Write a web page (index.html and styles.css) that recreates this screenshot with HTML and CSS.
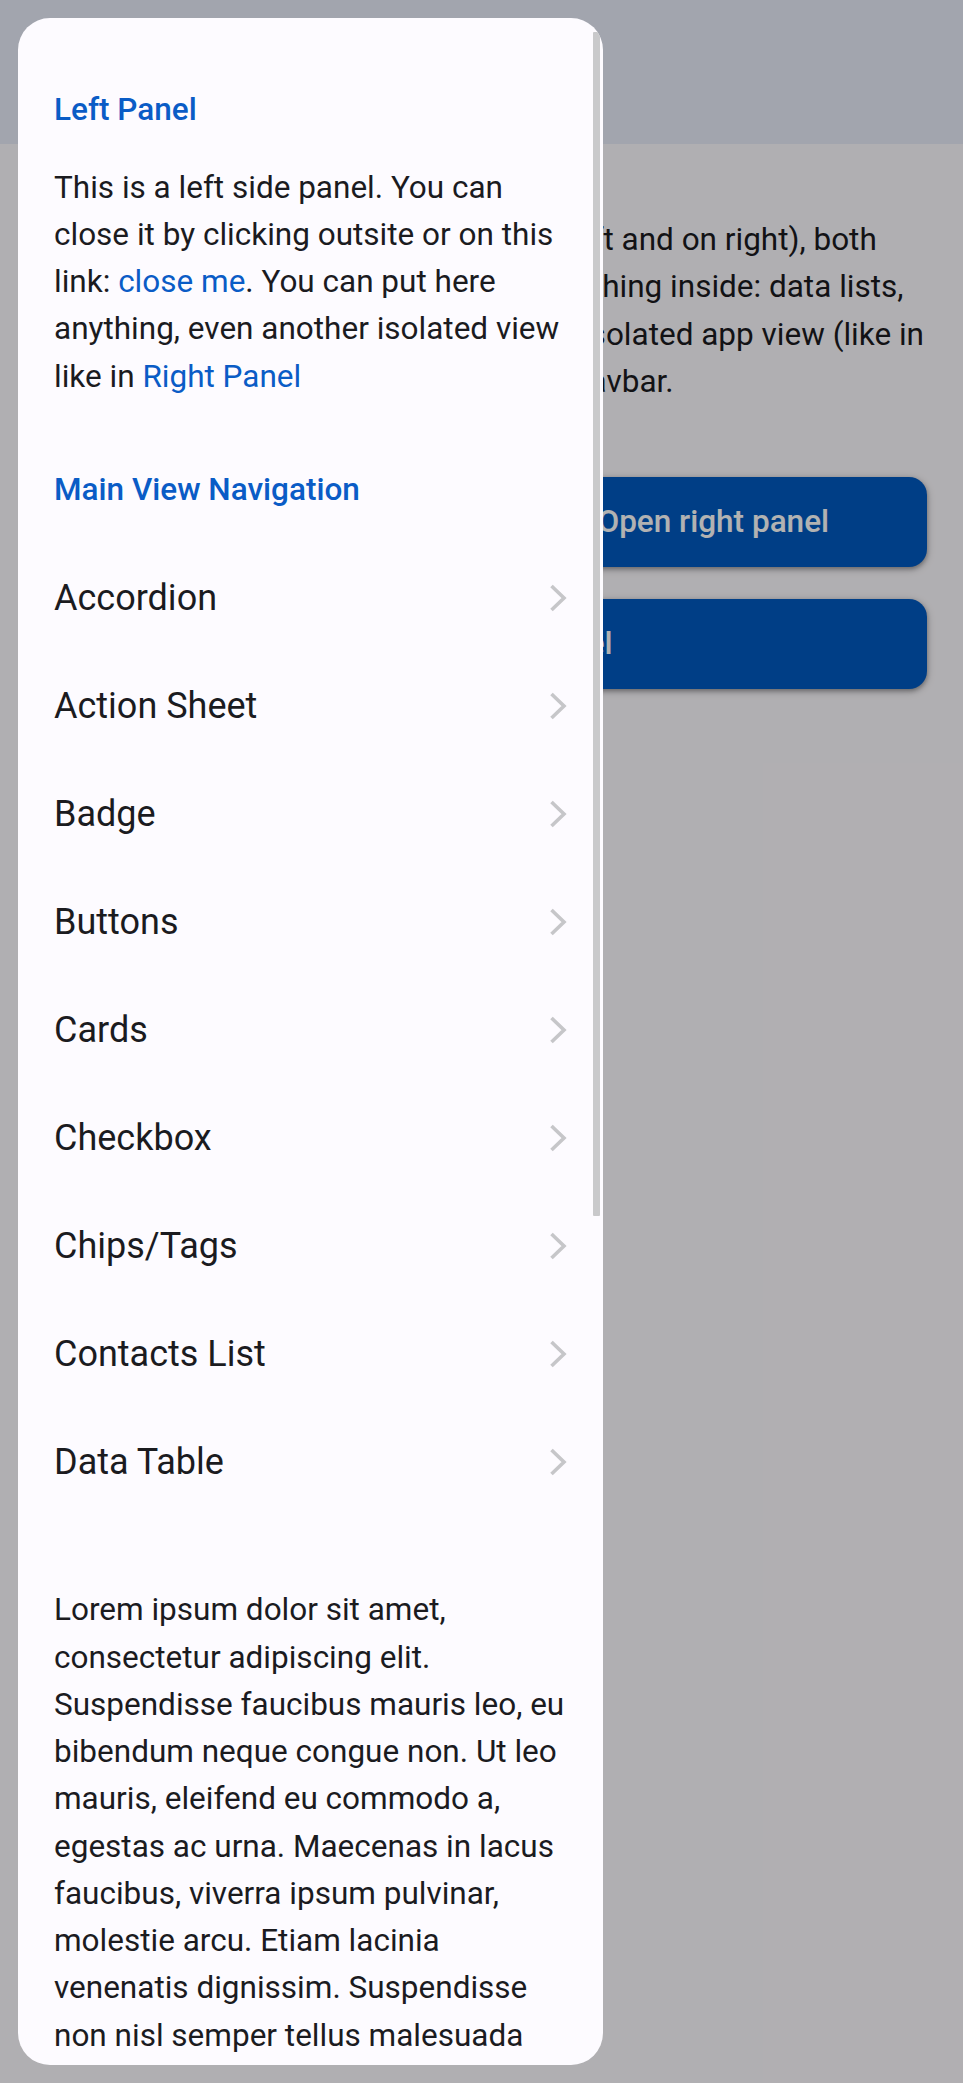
FILE: index.html
```html
<!DOCTYPE html>
<html lang="en">
<head>
<meta charset="utf-8">
<title>Panels</title>
<link rel="stylesheet" href="styles.css">
</head>
<body>
<div class="app">
  <div class="page">
    <header class="navbar">
      <div class="navbar-title">Panels</div>
    </header>
    <main class="page-content">
      <div class="block">
        <p>Framework7 comes with 2 panels (on left and on right), both are optional. You can put absolutely anything inside: data lists, forms, custom content, and even other isolated app view (like in right panel now) with its own dynamic navbar.</p>
      </div>
      <div class="block">
        <p class="grid-2">
          <a class="button" href="#">Open left panel</a>
          <a class="button" href="#">Open right panel</a>
        </p>
        <p class="row">
          <a class="button" href="#">Open nested panel</a>
        </p>
      </div>
    </main>
  </div>

  <div class="backdrop"></div>

  <aside class="panel">
    <div class="panel-inner">
      <div class="block-title">Left Panel</div>
      <div class="block">
        <p>This is a left side panel. You can close it by clicking outsite or on this link: <a class="link" href="#">close me</a>. You can put here anything, even another isolated view like in <a class="link" href="#">Right Panel</a></p>
      </div>
      <div class="block-title">Main View Navigation</div>
      <ul class="list">
        <li class="item"><span class="item-title">Accordion</span><svg class="chevron" viewBox="0 0 18 28"><polyline points="2.5,2 15,14 2.5,26"/></svg></li>
        <li class="item"><span class="item-title">Action Sheet</span><svg class="chevron" viewBox="0 0 18 28"><polyline points="2.5,2 15,14 2.5,26"/></svg></li>
        <li class="item"><span class="item-title">Badge</span><svg class="chevron" viewBox="0 0 18 28"><polyline points="2.5,2 15,14 2.5,26"/></svg></li>
        <li class="item"><span class="item-title">Buttons</span><svg class="chevron" viewBox="0 0 18 28"><polyline points="2.5,2 15,14 2.5,26"/></svg></li>
        <li class="item"><span class="item-title">Cards</span><svg class="chevron" viewBox="0 0 18 28"><polyline points="2.5,2 15,14 2.5,26"/></svg></li>
        <li class="item"><span class="item-title">Checkbox</span><svg class="chevron" viewBox="0 0 18 28"><polyline points="2.5,2 15,14 2.5,26"/></svg></li>
        <li class="item"><span class="item-title">Chips/Tags</span><svg class="chevron" viewBox="0 0 18 28"><polyline points="2.5,2 15,14 2.5,26"/></svg></li>
        <li class="item"><span class="item-title">Contacts List</span><svg class="chevron" viewBox="0 0 18 28"><polyline points="2.5,2 15,14 2.5,26"/></svg></li>
        <li class="item"><span class="item-title">Data Table</span><svg class="chevron" viewBox="0 0 18 28"><polyline points="2.5,2 15,14 2.5,26"/></svg></li>
      </ul>
      <div class="block">
        <p>Lorem ipsum dolor sit amet, consectetur adipiscing elit. Suspendisse faucibus mauris leo, eu bibendum neque congue non. Ut leo mauris, eleifend eu commodo a, egestas ac urna. Maecenas in lacus faucibus, viverra ipsum pulvinar, molestie arcu. Etiam lacinia venenatis dignissim. Suspendisse non nisl semper tellus malesuada suscipit eu et eros. Nulla eu enim quis quam elementum vulputate. Mauris ornare consequat nunc viverra pellentesque. Aenean semper eu massa sit amet aliquam. Integer et neque sed libero mollis elementum at vitae ligula. Vestibulum pharetra sed libero sed porttitor. Suspendisse a faucibus lectus.</p>
      </div>
    </div>
    <div class="scrollbar"></div>
  </aside>
</div>
</body>
</html>
```

FILE: styles.css
```css
* { box-sizing: border-box; }

html, body {
  margin: 0;
  padding: 0;
}

body {
  width: 963px;
  height: 2083px;
  overflow: hidden;
  font-family: Roboto, "Noto Sans", "Liberation Sans", sans-serif;
  color: #1b1b1f;
  background: #fdfbff;
}

.app {
  position: relative;
  width: 963px;
  height: 2083px;
  overflow: hidden;
}

.page {
  display: flex;
  flex-direction: column;
  height: 100%;
  background: #fdfbff;
}

.navbar {
  height: 144px;
  flex: none;
  background: rgb(233, 237, 249);
  display: flex;
  align-items: center;
  padding: 0 36px;
}

.navbar-title {
  font-size: 49.5px;
  font-weight: 400;
  padding-left: 80px;
}

.page-content {
  flex: 1;
}

.block {
  margin: 72px 0;
  padding: 0 36px;
  font-size: 31.5px;
  line-height: 47.25px;
}

.block p {
  margin: 31.5px 0;
}

.block p:first-child { margin-top: 0; }
.block p:last-child { margin-bottom: 0; }

.grid-2 {
  display: grid;
  grid-template-columns: 1fr 1fr;
  column-gap: 36px;
}

.row {
  display: flex;
}

.button {
  flex: 1;
  display: flex;
  align-items: center;
  justify-content: center;
  height: 90px;
  border-radius: 18px;
  background: #005ac1;
  color: #ffffff;
  font-size: 31.5px;
  font-weight: 500;
  text-decoration: none;
  box-shadow: 0 2px 4.5px rgba(0, 0, 0, 0.3), 0 2px 7px 2px rgba(0, 0, 0, 0.15);
}

.backdrop {
  position: absolute;
  inset: 0;
  background: rgba(0, 0, 0, 0.3);
}

.panel {
  position: absolute;
  left: 18px;
  top: 18px;
  bottom: 18px;
  width: 585px;
  border-radius: 32px;
  background: #fdfbff;
  overflow: hidden;
}

.panel-inner {
  padding-top: 73.5px;
}

.panel .block {
  margin: 36px 0 72px;
}

.block-title {
  padding: 0 36px;
  font-size: 31.5px;
  line-height: 36px;
  font-weight: 500;
  color: #0a5cc6;
}

.link {
  color: #0a5cc6;
  text-decoration: none;
}

.list {
  list-style: none;
  margin: 36px 0 70.5px;
  padding: 0;
}

.item {
  height: 108px;
  display: flex;
  align-items: center;
  justify-content: space-between;
  padding: 0 36px;
}

.item-title {
  font-size: 36px;
  line-height: 48px;
}

.chevron {
  width: 18px;
  height: 28px;
  flex: none;
  fill: none;
  stroke: #c6c6c9;
  stroke-width: 3.6;
  stroke-linejoin: miter;
}

.scrollbar {
  position: absolute;
  left: 575px;
  top: 14px;
  width: 7px;
  height: 1184px;
  background: #c9c9cb;
  border-radius: 1px;
}
```
